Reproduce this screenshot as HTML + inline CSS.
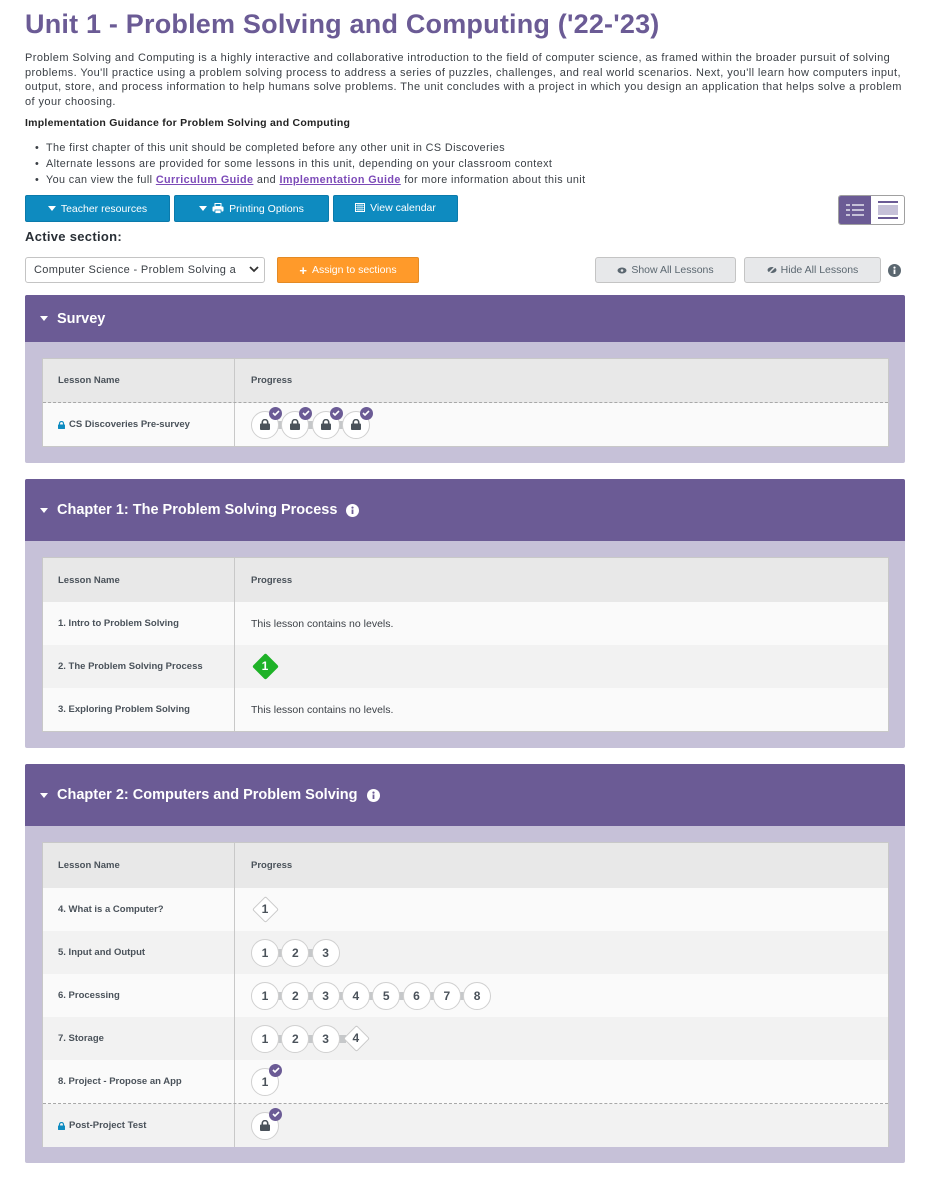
<!DOCTYPE html>
<html><head><meta charset="utf-8"><style>
*{box-sizing:border-box;margin:0;padding:0}
body{width:950px;height:1179px;background:#fff;font-family:"Liberation Sans",sans-serif;color:#292f36;position:relative;overflow:hidden}
.a{position:absolute}
h1{position:absolute;left:25px;top:9px;font-size:27px;color:#6b5b95;font-weight:bold;letter-spacing:0.2px}
.p{left:25px;top:51px;width:880px;font-size:11px;line-height:14.5px;color:#3a3f45;letter-spacing:0.42px}
.btn{position:absolute;height:27px;background:#0e8bc0;color:#fff;font-size:10.5px;border:1px solid #0b7aab;border-radius:2px;display:flex;align-items:center;justify-content:center;gap:5px}
.gbtn{position:absolute;height:26px;background:#e7e8ea;border:1px solid #c4c4c4;border-radius:3px;color:#5b6770;font-size:10.5px;display:flex;align-items:center;justify-content:center;gap:4px}
.sec{position:absolute;left:25px;width:880px;background:#c6c1d8;border-radius:2px}
.hd{background:#6b5b95;color:#fff;font-weight:bold;font-size:14.5px;display:flex;align-items:center;padding-left:15px;border-radius:2px 2px 0 0}
.tri{width:0;height:0;border-left:4.5px solid transparent;border-right:4.5px solid transparent;border-top:5px solid #fff;margin-right:9px}
.tbl{position:absolute;left:17px;width:847px;border:1px solid #c8c8c8;background:#fafafa}
.row{position:relative;display:flex;align-items:center;font-size:9.5px;font-weight:bold;color:#4a525a}
.row .c1{width:192px;padding-left:15px;border-right:1px solid #c8c8c8;height:100%;display:flex;align-items:center}
.row .c2{padding-left:16px;height:100%;display:flex;align-items:center;font-weight:normal;font-size:10.5px;color:#3a3f45;position:relative;flex:1}
.th{background:#e8e8e8}
.alt{background:#f2f2f2}
.b{position:absolute;width:28px;height:28px;border-radius:50%;border:1.5px solid #d0d0d0;background:#fff;display:flex;align-items:center;justify-content:center;font-size:12px;font-weight:bold;color:#4a525a;top:50%;margin-top:-14px;z-index:2}
.d{position:absolute;width:19px;height:19px;transform:rotate(45deg);border:1.5px solid #c9c9c9;background:#fff;top:50%;margin-top:-9.5px;z-index:2;border-radius:2px}
.dt{position:absolute;top:50%;margin-top:-8px;width:28px;text-align:center;font-size:12px;font-weight:bold;color:#4a525a;z-index:3}
.cn{position:absolute;height:8px;background:#c6c8ca;top:50%;margin-top:-4px;z-index:1}
.ck{position:absolute;width:13px;height:13px;border-radius:50%;background:#6b5b95;z-index:4;top:50%;margin-top:-18px;display:flex;align-items:center;justify-content:center}
ul li{margin-left:-10px}
</style></head><body>
<h1>Unit 1 - Problem Solving and Computing ('22-'23)</h1>
<div class="a p">Problem Solving and Computing is a highly interactive and collaborative introduction to the field of computer science, as framed within the broader pursuit of solving problems. You'll practice using a problem solving process to address a series of puzzles, challenges, and real world scenarios. Next, you'll learn how computers input, output, store, and process information to help humans solve problems. The unit concludes with a project in which you design an application that helps solve a problem of your choosing.</div>
<div class="a" style="left:25px;top:117px;font-size:10.5px;font-weight:bold;color:#222;letter-spacing:0.25px">Implementation Guidance for Problem Solving and Computing</div>
<ul class="a" style="left:45px;top:140px;font-size:10.8px;line-height:16px;color:#3a3f45;list-style:none;letter-spacing:0.4px">
<li>• &nbsp;The first chapter of this unit should be completed before any other unit in CS Discoveries</li>
<li>• &nbsp;Alternate lessons are provided for some lessons in this unit, depending on your classroom context</li>
<li>• &nbsp;You can view the full <b style="color:#7c4ab8;text-decoration:underline">Curriculum Guide</b> and <b style="color:#7c4ab8;text-decoration:underline">Implementation Guide</b> for more information about this unit</li>
</ul>
<div class="btn" style="left:25px;top:195px;width:145px"><span class="tri" style="margin:0"></span>Teacher resources</div>
<div class="btn" style="left:174px;top:195px;width:155px"><span class="tri" style="margin:0"></span><svg width="12" height="11" viewBox="0 0 12 11"><rect x="3" y="0.5" width="6" height="3" fill="none" stroke="#fff"/><rect x="0.5" y="3.5" width="11" height="5" rx="1" fill="#fff"/><rect x="3" y="7" width="6" height="3.5" fill="#fff" stroke="#0e8bc0" stroke-width="0.8"/></svg>Printing Options</div>
<div class="btn" style="left:333px;top:195px;width:125px;align-items:flex-start;padding-top:6px"><svg width="10" height="10" viewBox="0 0 10 10"><rect x="0.5" y="1.5" width="9" height="8" fill="none" stroke="#fff"/><path d="M0.5 3.5h9M3 1.5v8M5 1.5v8M7 1.5v8M0.5 5.5h9M0.5 7.5h9" stroke="#fff" stroke-width="0.6"/></svg>View calendar</div>
<div class="a" style="left:838px;top:195px;width:67px;height:30px;border:1px solid #a0a0a0;border-radius:3px;background:#fff;overflow:hidden">
<div class="a" style="left:0;top:0;width:32px;height:28px;background:#6b5b95"><svg width="32" height="28"><g fill="#c6c1d8"><rect x="7" y="8" width="4" height="2"/><rect x="13" y="8" width="12" height="2"/><rect x="7" y="13" width="4" height="2"/><rect x="13" y="13" width="12" height="2"/><rect x="7" y="18" width="4" height="2"/><rect x="13" y="18" width="12" height="2"/></g></svg></div>
<svg class="a" style="left:33px;top:0" width="32" height="28"><rect x="6" y="5" width="20" height="2" fill="#6b5b95"/><rect x="6" y="9" width="20" height="10" fill="#c6c1d8"/><rect x="6" y="21" width="20" height="2" fill="#6b5b95"/></svg>
</div>
<div class="a" style="left:25px;top:229px;font-size:13px;font-weight:bold;color:#292f36;letter-spacing:0.3px">Active section:</div>
<div class="a" style="left:25px;top:257px;width:240px;height:26px;border:1px solid #c4c4c4;border-radius:3px;background:#fff;font-size:11px;color:#3a3f45;padding:6px 0 0 8px;white-space:nowrap;overflow:hidden;letter-spacing:0.35px">Computer Science - Problem Solving a<svg class="a" style="right:5px;top:8px" width="10" height="8"><path d="M1 1l4 4 4-4" fill="none" stroke="#333" stroke-width="1.8"/></svg></div>
<div class="btn" style="left:277px;top:257px;width:142px;height:26px;background:#ff9a2a;border-color:#e38a25;font-weight:normal"><b style="font-size:13px">+</b> Assign to sections</div>
<div class="gbtn" style="left:595px;top:257px;width:141px"><svg width="10" height="7"><ellipse cx="5" cy="3.5" rx="4.5" ry="3" fill="#5b6770"/><circle cx="5" cy="3.5" r="1.3" fill="#e7e8ea"/></svg>Show All Lessons</div>
<div class="gbtn" style="left:744px;top:257px;width:137px"><svg width="10" height="8"><ellipse cx="5" cy="4" rx="4.5" ry="3" fill="#5b6770"/><path d="M1 8L9 0" stroke="#e7e8ea" stroke-width="1.5"/></svg>Hide All Lessons</div>
<svg class="a" style="left:888px;top:264px" width="13" height="13"><circle cx="6.5" cy="6.5" r="6.5" fill="#5b6770"/><rect x="5.6" y="5.5" width="1.8" height="4.5" fill="#fff"/><circle cx="6.5" cy="3.6" r="1.1" fill="#fff"/></svg>

<div class="sec" style="top:295px;height:168px">
<div class="hd" style="height:47px"><span class="tri"></span>Survey</div>
<div class="tbl" style="top:63px;height:89px">
<div class="row th" style="height:44px;border-bottom:1px dashed #a8a8a8"><div class="c1">Lesson Name</div><div class="c2" style="font-size:9.5px;font-weight:bold;color:#4a525a">Progress</div></div>
<div class="row" style="height:43px"><div class="c1"><svg width="7" height="8" style="margin-right:4px"><rect y="3.5" width="7" height="4.5" rx="0.5" fill="#0e8bc0"/><path d="M1.5 4V2.5a2 2 0 014 0V4" fill="none" stroke="#0e8bc0" stroke-width="1.2"/></svg>CS Discoveries Pre-survey</div><div class="c2" id="sv"></div></div>
</div></div>

<div class="sec" style="top:479px;height:269px">
<div class="hd" style="height:62px"><span class="tri"></span>Chapter 1: The Problem Solving Process<svg style="margin-left:9px" width="13" height="13"><circle cx="6.5" cy="6.5" r="6.5" fill="#fff"/><rect x="5.6" y="5.5" width="1.8" height="4.5" fill="#6b5b95"/><circle cx="6.5" cy="3.6" r="1.1" fill="#6b5b95"/></svg></div>
<div class="tbl" style="top:78px;height:175px">
<div class="row th" style="height:44px"><div class="c1">Lesson Name</div><div class="c2" style="font-size:9.5px;font-weight:bold;color:#4a525a">Progress</div></div>
<div class="row" style="height:43px"><div class="c1">1. Intro to Problem Solving</div><div class="c2">This lesson contains no levels.</div></div>
<div class="row alt" style="height:43px"><div class="c1">2. The Problem Solving Process</div><div class="c2"><div class="d" style="left:21px;background:#1fb228;border-color:#1fb228"></div><div class="dt" style="left:16px;color:#fff">1</div></div></div>
<div class="row" style="height:43px"><div class="c1">3. Exploring Problem Solving</div><div class="c2">This lesson contains no levels.</div></div>
</div></div>

<div class="sec" style="top:764px;height:399px">
<div class="hd" style="height:62px"><span class="tri"></span>Chapter 2: Computers and Problem Solving<svg style="margin-left:9px" width="13" height="13"><circle cx="6.5" cy="6.5" r="6.5" fill="#fff"/><rect x="5.6" y="5.5" width="1.8" height="4.5" fill="#6b5b95"/><circle cx="6.5" cy="3.6" r="1.1" fill="#6b5b95"/></svg></div>
<div class="tbl" style="top:78px;height:305px">
<div class="row th" style="height:45px"><div class="c1">Lesson Name</div><div class="c2" style="font-size:9.5px;font-weight:bold;color:#4a525a">Progress</div></div>
<div class="row" style="height:43px"><div class="c1">4. What is a Computer?</div><div class="c2" id="r4"></div></div>
<div class="row alt" style="height:43px"><div class="c1">5. Input and Output</div><div class="c2" id="r5"></div></div>
<div class="row" style="height:43px"><div class="c1">6. Processing</div><div class="c2" id="r6"></div></div>
<div class="row alt" style="height:43px"><div class="c1">7. Storage</div><div class="c2" id="r7"></div></div>
<div class="row" style="height:44px;border-bottom:1px dashed #a8a8a8"><div class="c1">8. Project - Propose an App</div><div class="c2" id="r8"></div></div>
<div class="row alt" style="height:43px"><div class="c1"><svg width="7" height="8" style="margin-right:4px"><rect y="3.5" width="7" height="4.5" rx="0.5" fill="#0e8bc0"/><path d="M1.5 4V2.5a2 2 0 014 0V4" fill="none" stroke="#0e8bc0" stroke-width="1.2"/></svg>Post-Project Test</div><div class="c2" id="r9"></div></div>
</div></div>

<script>
var LOCK='<svg width="10" height="11"><rect y="4.5" width="10" height="6.5" rx="1" fill="#4a525a"/><path d="M2.3 5V3.3a2.7 2.7 0 015.4 0V5" fill="none" stroke="#4a525a" stroke-width="1.6"/></svg>';
var CK='<svg width="8" height="6"><path d="M1 3l2 2 4-4" fill="none" stroke="#fff" stroke-width="1.6"/></svg>';
function build(id,items){
 var el=document.getElementById(id),h='';
 items.forEach(function(it,i){
  var x=16+i*30.3;
  if(i>0)h+='<div class="cn" style="left:'+(x-8)+'px;width:12px"></div>';
  if(it.d){h+='<div class="d" style="left:'+(x+5)+'px"></div><div class="dt" style="left:'+x+'px">'+it.t+'</div>';}
  else h+='<div class="b" style="left:'+x+'px">'+it.t+'</div>';
  if(it.c)h+='<div class="ck" style="left:'+(x+18)+'px">'+CK+'</div>';
 });
 el.innerHTML=h;
}
var L={t:LOCK,c:1};
build('sv',[L,L,L,L]);
build('r4',[{t:1,d:1}]);
build('r5',[{t:1},{t:2},{t:3}]);
build('r6',[1,2,3,4,5,6,7,8].map(function(n){return{t:n}}));
build('r7',[{t:1},{t:2},{t:3},{t:4,d:1}]);
build('r8',[{t:1,c:1}]);
build('r9',[L]);
</script>
</body></html>
